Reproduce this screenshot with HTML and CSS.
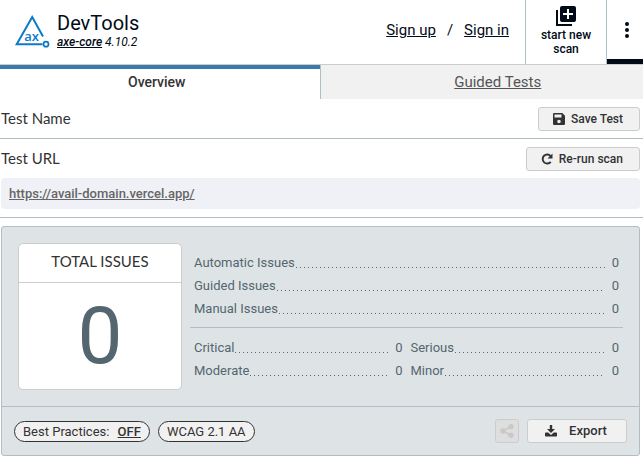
FILE: index.html
```html
<!DOCTYPE html>
<html lang="en">
<head>
<meta charset="utf-8">
<meta name="viewport" content="width=device-width, initial-scale=1">
<title>DevTools</title>
<link rel="stylesheet" href="styles.css">
</head>
<body>
<header class="header">
  <svg class="logo" viewBox="0 0 36 34" width="36" height="34" aria-hidden="true">
    <path d="M29 21.500 18.200 2 2.700 29.200H28.500" fill="none" stroke="#0b7ac9" stroke-width="2"/>
    <circle cx="32" cy="29.200" r="2.500" fill="none" stroke="#0b7ac9" stroke-width="1.700"/>
    <text class="logo-text" x="17.500" y="26" text-anchor="middle">ax</text>
  </svg>
  <div class="brand">
    <h1 class="brand-name">DevTools</h1>
    <p class="version"><a href="#core">axe-core</a> 4.10.2</p>
  </div>
  <nav class="account"><a href="#signup">Sign up</a><span>/</span><a href="#signin">Sign in</a></nav>
  <button class="new-scan" type="button">
    <svg viewBox="0 0 20 20" width="20" height="20" aria-hidden="true">
      <path d="M1 4v15h15" fill="none" stroke="#000b17" stroke-width="2"/>
      <rect x="4" width="16" height="16" rx="2" fill="#000b17"/>
      <path d="M12 3v10M7 8h10" stroke="#fff" stroke-width="2"/>
    </svg>
    <span>start new scan</span>
  </button>
  <button class="more" type="button" aria-label="Options">
    <svg viewBox="0 0 4 16" width="4" height="16" aria-hidden="true" fill="#000b17"><circle cx="2" cy="2" r="2"/><circle cx="2" cy="8" r="2"/><circle cx="2" cy="14" r="2"/></svg>
  </button>
</header>
<nav class="tabs">
  <a class="tab active" href="#overview">Overview</a>
  <a class="tab" href="#guided">Guided Tests</a>
</nav>
<main>
  <section class="section row">
    <h2 class="heading">Test Name</h2>
    <button class="button" type="button">
      <svg viewBox="0 0 12 12" width="12" height="12" aria-hidden="true"><path fill="#333" fill-rule="evenodd" d="M1.300 0h8L12 2.700v8Q12 12 10.700 12H1.300Q0 12 0 10.700V1.300Q0 0 1.300 0ZM1.500 1.500v3h7v-3ZM6 6.700a1.800 1.800 0 1 0 0 3.600 1.800 1.800 0 0 0 0-3.600Z"/></svg>
      Save Test
    </button>
  </section>
  <section class="section">
    <div class="row">
      <h2 class="heading">Test URL</h2>
      <button class="button" type="button">
        <svg viewBox="0 0 12 12" width="12" height="12" aria-hidden="true"><path d="M9.600 3.100A4.500 4.500 0 1 0 9.700 8.800" fill="none" stroke="#333" stroke-width="1.900"/><path d="M11.500.500v5h-5Z" fill="#333"/></svg>
        Re-run scan
      </button>
    </div>
    <div class="url"><a href="#site">https://avail-domain.vercel.app/</a></div>
  </section>
  <section class="panel">
    <div class="summary">
      <div class="total">
        <h2 class="total-title">TOTAL ISSUES</h2>
        <div class="total-count">0</div>
      </div>
      <div class="stats">
        <dl class="group">
          <div class="stat"><dt>Automatic Issues</dt><dd>0</dd></div>
          <div class="stat"><dt>Guided Issues</dt><dd>0</dd></div>
          <div class="stat"><dt>Manual Issues</dt><dd>0</dd></div>
        </dl>
        <dl class="group severity">
          <div class="stat"><dt>Critical</dt><dd>0</dd></div>
          <div class="stat"><dt>Serious</dt><dd>0</dd></div>
          <div class="stat"><dt>Moderate</dt><dd>0</dd></div>
          <div class="stat"><dt>Minor</dt><dd>0</dd></div>
        </dl>
      </div>
    </div>
    <footer class="panel-footer">
      <button class="pill" type="button">Best Practices: <span class="off">OFF</span></button>
      <button class="pill" type="button">WCAG 2.1 AA</button>
      <button class="button share" type="button" aria-label="Share" disabled>
        <svg viewBox="0 0 14 14" width="14" height="14" aria-hidden="true"><path d="M11 2.800 3 7l8 4.200" fill="none" stroke="#c9c9c9" stroke-width="1.800"/><g fill="#c9c9c9"><circle cx="11" cy="2.800" r="2.700"/><circle cx="2.900" cy="7" r="2.700"/><circle cx="11" cy="11.200" r="2.700"/></g></svg>
      </button>
      <button class="button export" type="button">
        <svg viewBox="0 0 12 12" width="12" height="12" aria-hidden="true"><path fill="#333" d="M4.800 0h2.400v4H10L6 8 2 4h2.800ZM.800 7.500h2.400L6 10l2.800-2.500h2.400Q12 7.500 12 8.300v2.500q0 .800-.800.800H.800Q0 11.600 0 10.800V8.300Q0 7.500.800 7.500Z"/></svg>
        Export
      </button>
    </footer>
  </section>
</main>
</body>
</html>
```

FILE: styles.css
```css
* { box-sizing: border-box; }

body {
  margin: 0;
  background: #fff;
  color: #333;
  font-family: Roboto, "Liberation Sans", sans-serif;
  font-size: 13px;
  line-height: 16px;
}

h1, h2, p, dl, dd { margin: 0; font-weight: 400; }

button { font: inherit; color: inherit; cursor: pointer; }

svg { flex: none; }

.header {
  display: flex;
  align-items: stretch;
  height: 65px;
  border-bottom: 1px solid #ccc;
  color: #000b17;
}

.logo { align-self: center; margin-left: 14px; }

.logo-text {
  fill: #0b7ac9;
  font-family: "Open Sans", sans-serif;
  font-size: 13px;
  font-weight: 600;
}

.brand { flex: 1; margin-left: 7px; padding-top: 12px; }
.brand-name { font-size: 20px; line-height: 22px; }
.version { font-size: 12px; font-style: italic; }
.version a { color: inherit; font-weight: 500; }

.account {
  display: flex;
  align-items: center;
  gap: 11px;
  padding: 0 16px 4px;
  font-size: 15px;
}

.account a { color: inherit; }

.new-scan {
  display: flex;
  flex-direction: column;
  align-items: center;
  gap: 2px;
  width: 82px;
  padding: 6px 12px 0;
  border: solid #b0bec5;
  border-width: 0 1px;
  background: #fff;
  font-size: 12px;
  font-weight: 500;
  line-height: 14px;
}

.more {
  display: flex;
  align-items: center;
  justify-content: center;
  width: 36px;
  padding: 0 0 0 4px;
  border: 0;
  border-bottom: 5px solid #000b17;
  background: #fff;
}

.tabs { display: grid; grid-template-columns: calc(50% - 2px) 1fr; }

.tab {
  height: 34px;
  padding: 8px 0 0 32px;
  border-left: 1px solid #b0bec5;
  background: #f1f1f1;
  color: #555;
  font-size: 15px;
  line-height: 18px;
  text-align: center;
}

.tab.active {
  padding: 4px 6px 0 0;
  border-top: 4px solid #3c7aae;
  border-left: 0;
  background: #fff;
  color: #333;
  font-size: 14px;
  font-weight: 500;
  text-decoration: none;
}

.section { padding: 8px 3px 7px 1px; border-bottom: 1px solid #b0bec5; }

.section + .section { padding-bottom: 0; }

.row { display: flex; align-items: center; justify-content: space-between; }

.heading { padding-bottom: 2px; font-family: Lato, sans-serif; font-size: 15px; line-height: 18px; }

.button {
  display: flex;
  align-items: center;
  justify-content: center;
  gap: 6px;
  height: 24px;
  padding: 0 16px 0 14px;
  border: 1px solid #ccc;
  border-radius: 3px;
  background: #f1f1f1;
  font-size: 12px;
  font-weight: 500;
}

.url {
  margin: 7px 0 8px;
  padding: 8px 8px 7px;
  border-radius: 4px;
  background: #f0f1f6;
  font-size: 13px;
  font-weight: 500;
}

.url a { color: #666; }

.panel {
  margin: 8px 3px 0 1px;
  border: 1px solid #b0bec5;
  border-radius: 3px;
  background: #dee4e6;
}

.summary { display: flex; gap: 8px; padding: 16px; }

.total {
  flex: none;
  width: 164px;
  height: 147px;
  border: 1px solid #ccc;
  border-radius: 5px;
  background: #fff;
  text-align: center;
}

.total-title {
  padding: 8px 0 11px;
  border-bottom: 1px solid #ccc;
  font-family: Lato, sans-serif;
  font-size: 15px;
  line-height: 19px;
}

.total-count { color: #546670; font-size: 80px; line-height: 106px; }

.stats { flex: 1; padding-top: 8px; }

.group { padding: 0 4px 7px; }

.severity {
  display: grid;
  grid-template-columns: 1fr 1fr;
  column-gap: 8px;
  padding-top: 8px;
  border-top: 1px solid #b0bec5;
}

.stat {
  display: flex;
  align-items: center;
  height: 23px;
  color: #546670;
}

.stat dt { display: flex; flex: 1; }

.stat dt::after {
  content: "";
  flex: 1;
  height: 13px;
  margin: 0 7px 0 1px;
  background: repeating-linear-gradient(90deg, #546670 0 1px, transparent 1px 4px) left bottom / 100% 1px no-repeat;
}

.panel-footer {
  display: flex;
  align-items: center;
  gap: 8px;
  padding: 12px;
  border-top: 1px solid #b0bec5;
}

.pill {
  height: 21px;
  padding: 0 8px;
  border: 1px solid #333;
  border-radius: 11px;
  background: #f1f1f1;
  font-size: 13px;
  line-height: 19px;
}

.off { margin-left: 5px; font-weight: 500; text-decoration: underline; }

.share {
  width: 24px;
  margin-left: auto;
  padding: 0;
  border-color: #ccc;
  background: #dedede;
}

.export { gap: 12px; width: 100px; font-size: 13px; }
```
